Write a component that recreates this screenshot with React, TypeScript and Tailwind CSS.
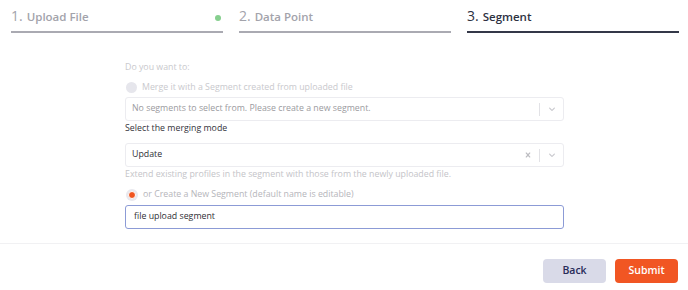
import React from "react";

const font = { fontFamily: '"Open Sans", "Noto Sans", sans-serif' };

function Chevron() {
  return (
    <svg width="10" height="10" viewBox="0 0 20 20" fill="#c7c7cc">
      <path d="M4.516 7.548c.436-.446 1.043-.481 1.576 0L10 11.295l3.908-3.747c.533-.481 1.141-.446 1.574 0 .436.445.408 1.197 0 1.615-.406.418-4.695 4.502-4.695 4.502a1.095 1.095 0 0 1-1.576 0S4.924 9.581 4.516 9.163c-.409-.418-.436-1.170 0-1.615z" />
    </svg>
  );
}

function Cross() {
  return (
    <svg width="10" height="10" viewBox="0 0 20 20" fill="#bdbdc2">
      <path d="M14.348 14.849c-.469.469-1.229.469-1.697 0L10 11.819l-2.651 3.029c-.469.469-1.229.469-1.697 0-.469-.469-.469-1.229 0-1.697l2.758-3.15-2.759-3.152c-.469-.469-.469-1.228 0-1.697.469-.469 1.228-.469 1.697 0L10 8.183l2.651-3.031c.469-.469 1.228-.469 1.697 0 .469.469.469 1.229 0 1.697l-2.758 3.152 2.758 3.15c.469.469.469 1.229 0 1.698z" />
    </svg>
  );
}

function Step({ num, label, active, done }: { num: string; label: string; active?: boolean; done?: boolean }) {
  return (
    <div className={`flex-1 flex items-end justify-between pb-[5px] border-b-2 ${active ? "border-[#343848]" : "border-[#aaaab2]"}`}>
      <div className={`flex items-baseline gap-[4px] ${active ? "text-[#2d3142]" : "text-[#a3a3ab]"}`}>
        <span className="text-[14px] leading-[18px]">{num}</span>
        <span className="text-[11.5px] font-semibold leading-[18px]">{label}</span>
      </div>
      {done && <span className="mb-[5px] mr-[2px] w-[6px] h-[6px] rounded-full bg-[#86cf8e]" />}
    </div>
  );
}

export default function App() {
  return (
    <div className="w-[688px] h-[290px] bg-white flex flex-col" style={font}>
      <div className="flex gap-4 pl-[11px] pr-[9px] pt-[7px]">
        <Step num="1." label="Upload File" done />
        <Step num="2." label="Data Point" />
        <Step num="3." label="Segment" active />
      </div>

      <div className="flex flex-col w-[439px] ml-[125px] mt-[28px] text-[8.8px]">
        <div className="text-[#c9c9cd] leading-[13px]">Do you want to:</div>
        <div className="flex items-center gap-[5px] mt-[7px] pl-[1px] h-[13px]">
          <span className="w-[11px] h-[11px] rounded-full bg-[#e6e6ec]" />
          <span className="text-[#c9c9cd]">Merge it with a Segment created from uploaded file</span>
        </div>
        <div className="mt-[3px] h-[24px] border border-[#ececf0] rounded-[3px] flex items-center">
          <span className="flex-1 pl-[6px] text-[#9b9ba0]">No segments to select from. Please create a new segment.</span>
          <span className="w-px h-[13px] bg-[#e2e2e6]" />
          <span className="w-[23px] flex justify-center"><Chevron /></span>
        </div>
        <div className="mt-[1px] text-[#34343c] leading-[13px]">Select the merging mode</div>
        <div className="mt-[8px] h-[24px] border border-[#ececf0] rounded-[3px] flex items-center">
          <span className="flex-1 pl-[6px] text-[#2f2f36]">Update</span>
          <span className="w-[22px] flex justify-center"><Cross /></span>
          <span className="w-px h-[13px] bg-[#e2e2e6]" />
          <span className="w-[23px] flex justify-center"><Chevron /></span>
        </div>
        <div className="mt-[1px] text-[#c4c4c8] leading-[13px]">Extend existing profiles in the segment with those from the newly uploaded file.</div>
        <div className="flex items-center gap-[5px] mt-[7px] pl-[1px] h-[13px]">
          <span className="w-[12px] h-[12px] rounded-full bg-[#e8e8ee] flex items-center justify-center">
            <span className="w-[8px] h-[8px] rounded-full bg-[#f0541f] border border-white" />
          </span>
          <span className="text-[#b5b5ba]">or Create a New Segment (default name is editable)</span>
        </div>
        <div className="mt-[4px] h-[24px] border border-[#8c9bd6] rounded-[3px] flex items-center pl-[8px] text-[#2f2f36]">
          file upload segment
        </div>
      </div>

      <div className="mt-[14px] h-px bg-[#f1f1f3]" />

      <div className="flex justify-end gap-[9px] pr-[10px] mt-[15px]">
        <button className="w-[63px] h-[24px] rounded-[4px] bg-[#d9dae8] text-[#282b58] text-[10.5px] font-semibold">Back</button>
        <button className="w-[63px] h-[24px] rounded-[4px] bg-[#f15623] text-white text-[10.5px] font-semibold">Submit</button>
      </div>
    </div>
  );
}
